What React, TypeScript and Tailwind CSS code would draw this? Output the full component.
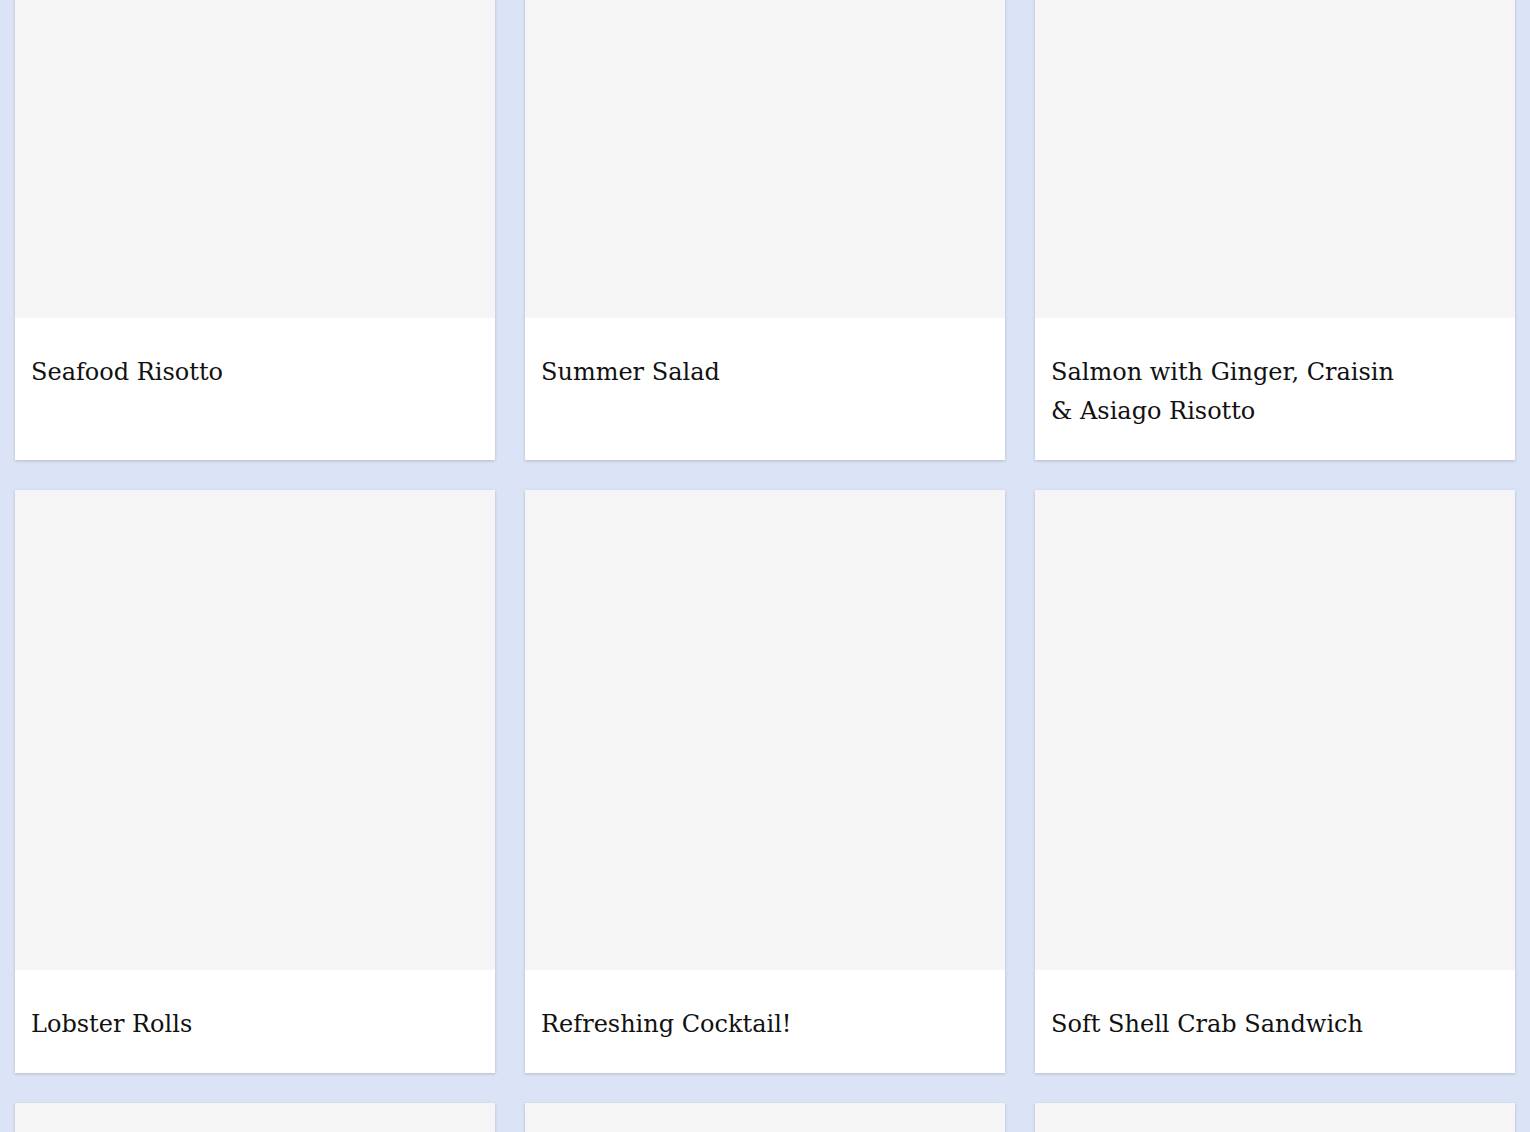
import React from "react";

const items = [
  "Seafood Risotto",
  "Summer Salad",
  "Salmon with Ginger, Craisin & Asiago Risotto",
  "Lobster Rolls",
  "Refreshing Cocktail!",
  "Soft Shell Crab Sandwich",
];

export default function App() {
  return (
    <div className="bg-[#dbe3f6] overflow-hidden h-[1132px]">
      <div className="grid grid-cols-3 gap-[30px] px-[15px] -mt-[162px]">
        {items.map((t) => (
          <div key={t} className="flex flex-col bg-white shadow-[0_1px_3px_rgba(0,0,0,0.18)]">
            <div className="aspect-square w-full bg-[#f5f5f5]" />
            <div className="flex-1 px-4 pt-[35px] pb-[29px]">
              <h2
                className="max-w-[350px] text-[24px] leading-[39px] text-[#111] font-normal"
                style={{ fontFamily: '"DejaVu Serif", serif' }}
              >
                {t}
              </h2>
            </div>
          </div>
        ))}
        {[0, 1, 2].map((i) => (
          <div key={i} className="flex flex-col bg-white shadow-[0_1px_3px_rgba(0,0,0,0.18)]">
            <div className="aspect-square w-full bg-[#f5f5f5]" />
          </div>
        ))}
      </div>
    </div>
  );
}
